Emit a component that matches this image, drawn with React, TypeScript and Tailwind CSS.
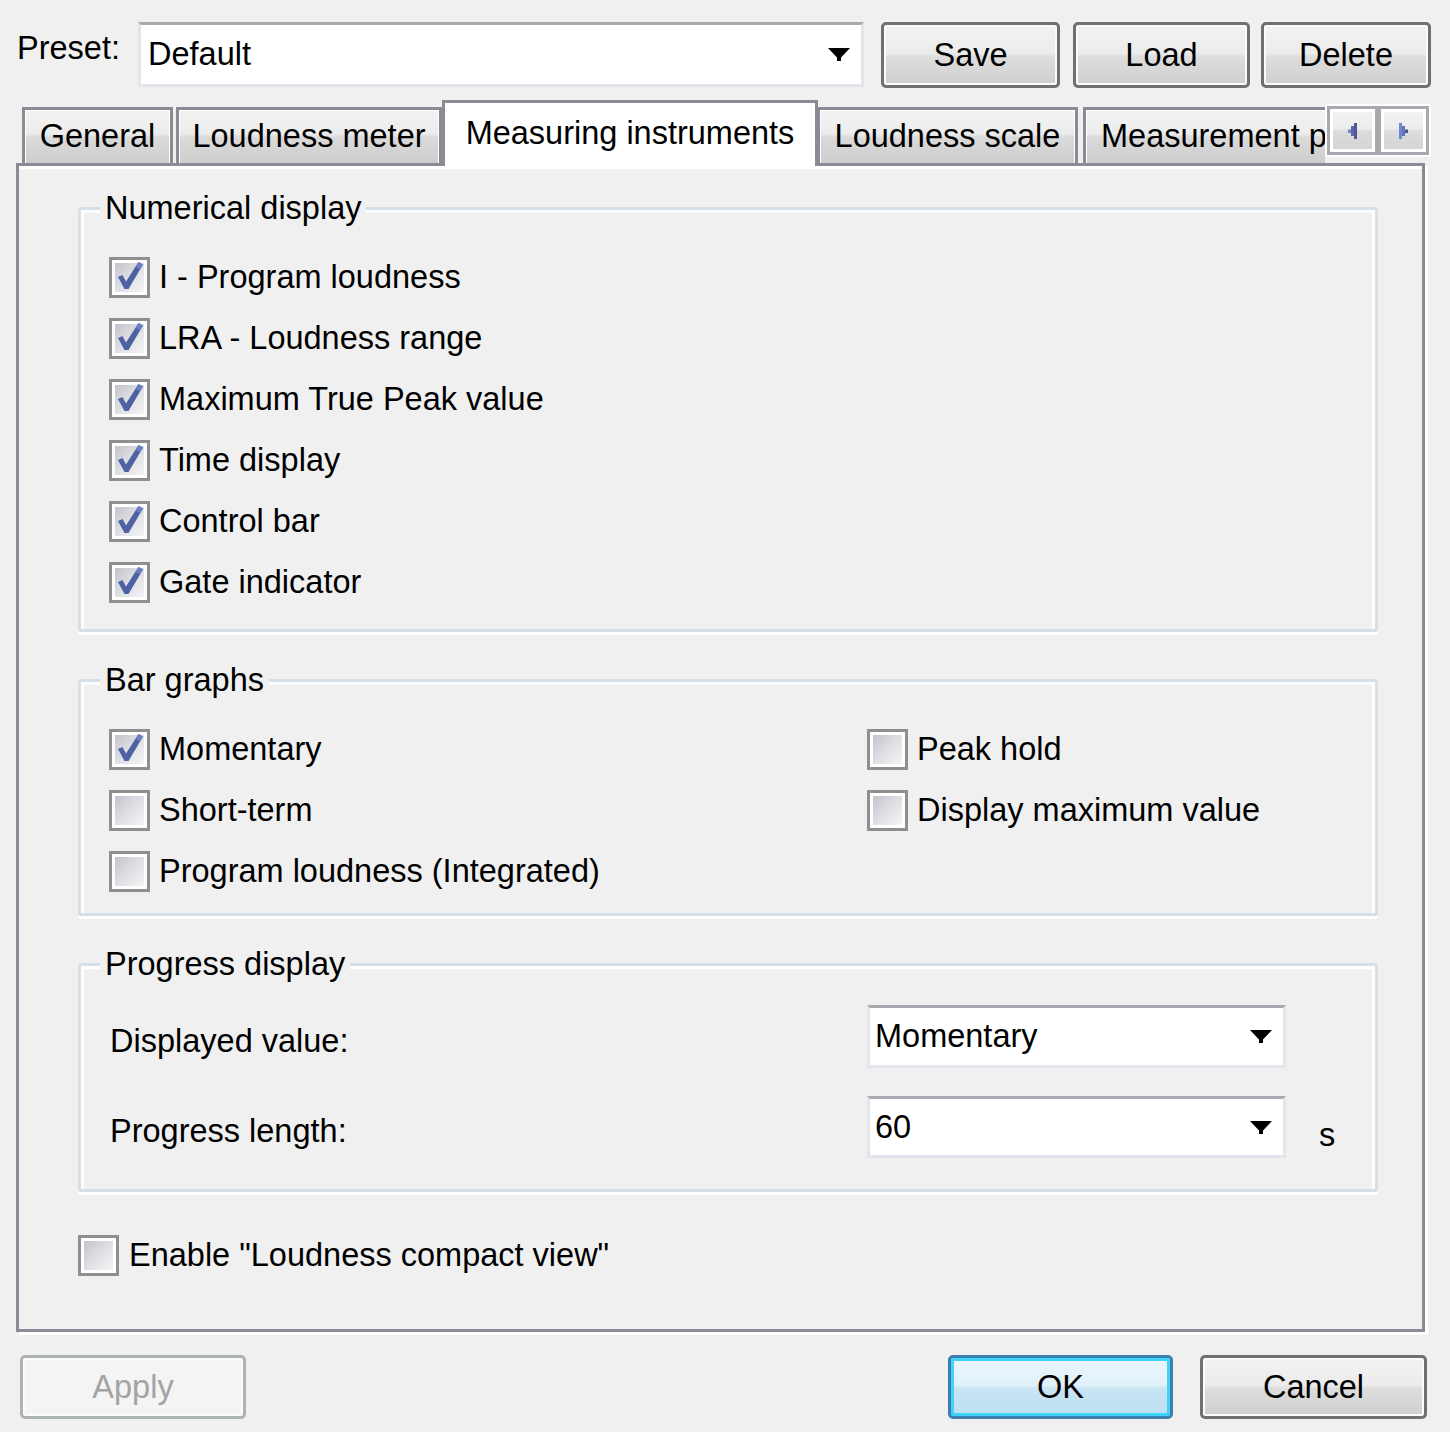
import React from "react";

function Check({ checked }: { checked?: boolean }) {
  return (
    <div className="relative w-[41px] h-[41px] shrink-0 border-[3px] border-[#8f8f8f] bg-white p-[3px]">
      <div className="w-full h-full bg-[linear-gradient(135deg,#c2c4cc_0%,#dcdde2_45%,#f5f5f6_100%)]" />
      {checked && (
        <svg className="absolute left-0 top-0" width="35" height="35" viewBox="0 0 35 35">
          <path d="M6 17 L10.5 15 L14 21.5 L26.5 2 L31 4.5 L16.5 29 L12.5 29 Z" fill="#4e61a2" />
          <path d="M26.5 2 L31 4.5 L28 9.5 L24 7 Z" fill="#6a7fc4" />
        </svg>
      )}
    </div>
  );
}

function Arrow() {
  return (
    <svg width="22" height="13" viewBox="0 0 22 13" className="shrink-0">
      <path d="M0 0 H22 L13 9.5 V13 H9 V9.5 Z" fill="#000" />
    </svg>
  );
}

function Combo({ value, className }: { value: string; className: string }) {
  return (
    <div
      className={`flex items-center shrink-0 bg-white border-[3px] border-[#e2e5eb] border-t-[#a9aab0] ${className}`}
    >
      <span className="flex-1 whitespace-nowrap">{value}</span>
      <Arrow />
    </div>
  );
}

function Btn({ children, className }: { children: React.ReactNode; className: string }) {
  return (
    <div
      className={`flex items-center justify-center shrink-0 rounded-[5px] border-[3px] border-[#707070] shadow-[inset_0_0_0_2px_#fbfbfb] bg-[linear-gradient(#f3f3f3_0%,#ebebeb_47%,#dddddd_53%,#cfcfcf_100%)] ${className}`}
    >
      {children}
    </div>
  );
}

function Tab({ children, className }: { children: React.ReactNode; className: string }) {
  return (
    <div
      className={`flex items-center shrink-0 whitespace-nowrap h-[56px] mb-[3px] border-[3px] border-b-0 border-[#898c95] shadow-[inset_1px_1px_0_#ffffff,inset_-1px_0_0_#ffffff] bg-[linear-gradient(#f3f3f3_0%,#ececec_45%,#dadada_52%,#cdcdcd_100%)] ${className}`}
    >
      {children}
    </div>
  );
}

function Group({
  title,
  className,
  children,
}: {
  title: string;
  className: string;
  children: React.ReactNode;
}) {
  return (
    <div
      className={`relative w-[1300px] shrink-0 rounded-[3px] border-[3px] border-[#d5dfe5] shadow-[inset_3px_3px_0_#ffffff,inset_-3px_0_0_#ffffff,0_3px_0_#ffffff] ${className}`}
    >
      <div className="absolute left-[19px] top-[-22px] h-[40px] leading-[40px] px-[5px] bg-[#f0f0f0] whitespace-nowrap">
        {title}
      </div>
      {children}
    </div>
  );
}

function Row({ checked, label }: { checked?: boolean; label: string }) {
  return (
    <div className="flex items-center h-[61px] gap-[9px] whitespace-nowrap">
      <Check checked={checked} />
      <span>{label}</span>
    </div>
  );
}

function TabArrowLeft() {
  return (
    <svg width="9" height="16" viewBox="0 0 9 16">
      <rect x="0" y="6.5" width="3" height="3.5" fill="#6f86d2" />
      <rect x="3" y="3" width="3" height="10" fill="#5a68a8" />
      <rect x="6" y="0" width="3" height="16" fill="#4f5a92" />
    </svg>
  );
}

function TabArrowRight() {
  return (
    <svg width="9" height="16" viewBox="0 0 9 16">
      <rect x="0" y="0" width="3" height="16" fill="#6f86d2" />
      <rect x="3" y="3" width="3" height="10" fill="#6474b4" />
      <rect x="6" y="6.5" width="3" height="3.5" fill="#4f5a92" />
    </svg>
  );
}

export default function App() {
  return (
    <div className="w-[1450px] h-[1432px] bg-[#f0f0f0] text-black overflow-hidden font-['Liberation_Sans',Arial,sans-serif] text-[32.5px] leading-none">
      {/* Preset row */}
      <div className="flex items-start pt-[22px] h-[100px]">
        <div className="ml-[17px] w-[121px] h-[53px] leading-[53px] shrink-0">Preset:</div>
        <Combo value="Default" className="w-[726px] h-[65px] pl-[7px] pr-[11px]" />
        <Btn className="ml-[17px] w-[179px] h-[66px]">Save</Btn>
        <Btn className="ml-[13px] w-[177px] h-[66px]">Load</Btn>
        <Btn className="ml-[11px] w-[170px] h-[66px]">Delete</Btn>
      </div>

      {/* Tabs row */}
      <div className="relative z-10 flex h-[66px]">
        <div className="ml-[22px] w-[1303px] shrink-0 flex items-end overflow-hidden">
          <Tab className="w-[151px] justify-center">General</Tab>
          <Tab className="ml-[3px] w-[266px] justify-center">Loudness meter</Tab>
          <div className="flex items-center justify-center shrink-0 whitespace-nowrap w-[376px] h-[66px] border-[3px] border-b-0 border-[#898c95] bg-white pb-[3px]">
            Measuring instruments
          </div>
          <Tab className="-ml-[1px] w-[261px] justify-center">Loudness scale</Tab>
          <Tab className="ml-[5px] w-[420px] pl-[15px]">Measurement parameters</Tab>
        </div>
        <div className="mt-[4px] w-[106px] h-[53px] shrink-0 bg-white p-[2px]">
          <div className="w-full h-full bg-[#a8a9ae] p-[3px] flex gap-[6px]">
            <div className="flex-1 flex items-center justify-center border-[3px] border-white bg-[linear-gradient(#f2f2f2_0%,#ececec_45%,#dcdcdc_52%,#d4d4d4_100%)]">
              <TabArrowLeft />
            </div>
            <div className="flex-1 flex items-center justify-center border-[3px] border-white bg-[linear-gradient(#f2f2f2_0%,#ececec_45%,#dcdcdc_52%,#d4d4d4_100%)]">
              <TabArrowRight />
            </div>
          </div>
        </div>
      </div>

      {/* Tab panel */}
      <div className="-mt-[3px] ml-[16px] w-[1409px] h-[1169px] border-[3px] border-[#898c95] bg-[#f0f0f0] shadow-[inset_0_3px_0_#ffffff,3px_3px_0_#ffffff] pl-[59px] pt-[41px] flex flex-col">
        <Group title="Numerical display" className="pt-[37px] pb-[16px] pl-[28px]">
          <Row checked label="I - Program loudness" />
          <Row checked label="LRA - Loudness range" />
          <Row checked label="Maximum True Peak value" />
          <Row checked label="Time display" />
          <Row checked label="Control bar" />
          <Row checked label="Gate indicator" />
        </Group>

        <Group title="Bar graphs" className="mt-[47px] pt-[37px] pb-[11px] pl-[28px]">
          <div className="grid grid-cols-[758px_1fr]">
            <Row checked label="Momentary" />
            <Row label="Peak hold" />
            <Row label="Short-term" />
            <Row label="Display maximum value" />
            <Row label="Program loudness (Integrated)" />
          </div>
        </Group>

        <Group title="Progress display" className="mt-[47px] pt-[39px] pb-[31px] pl-[28px]">
          <div className="flex items-center h-[63px]">
            <div className="w-[758px] pl-[1px] pt-[9px] shrink-0 whitespace-nowrap">Displayed value:</div>
            <Combo value="Momentary" className="w-[419px] h-[63px] pl-[5px] pr-[11px]" />
          </div>
          <div className="flex items-center h-[62px] mt-[28px]">
            <div className="w-[758px] pl-[1px] pt-[9px] shrink-0 whitespace-nowrap">Progress length:</div>
            <Combo value="60" className="w-[419px] h-[62px] pl-[5px] pr-[11px]" />
            <div className="ml-[33px] pt-[16px]">s</div>
          </div>
        </Group>

        <div className="mt-[43px] flex items-center gap-[10px] whitespace-nowrap">
          <Check />
          <span>Enable "Loudness compact view"</span>
        </div>
      </div>

      {/* Bottom buttons */}
      <div className="flex items-center mt-[23px] h-[64px] pl-[20px] pr-[23px]">
        <div className="flex items-center justify-center w-[226px] h-[64px] shrink-0 rounded-[5px] border-[3px] border-[#adb2b5] bg-[#f4f4f4] shadow-[inset_0_0_0_2px_#fbfbfb] text-[#a3a3a3]">
          Apply
        </div>
        <div className="flex-1" />
        <div className="flex items-center justify-center w-[225px] h-[64px] shrink-0 rounded-[5px] border-[3px] border-[#3c7fb1] shadow-[inset_0_0_0_3px_#40d2f8] bg-[linear-gradient(#eaf6fc_0%,#e1f0f8_47%,#c8e5f4_53%,#bcdff0_100%)]">
          OK
        </div>
        <Btn className="ml-[27px] w-[227px] h-[64px]">Cancel</Btn>
      </div>
    </div>
  );
}
